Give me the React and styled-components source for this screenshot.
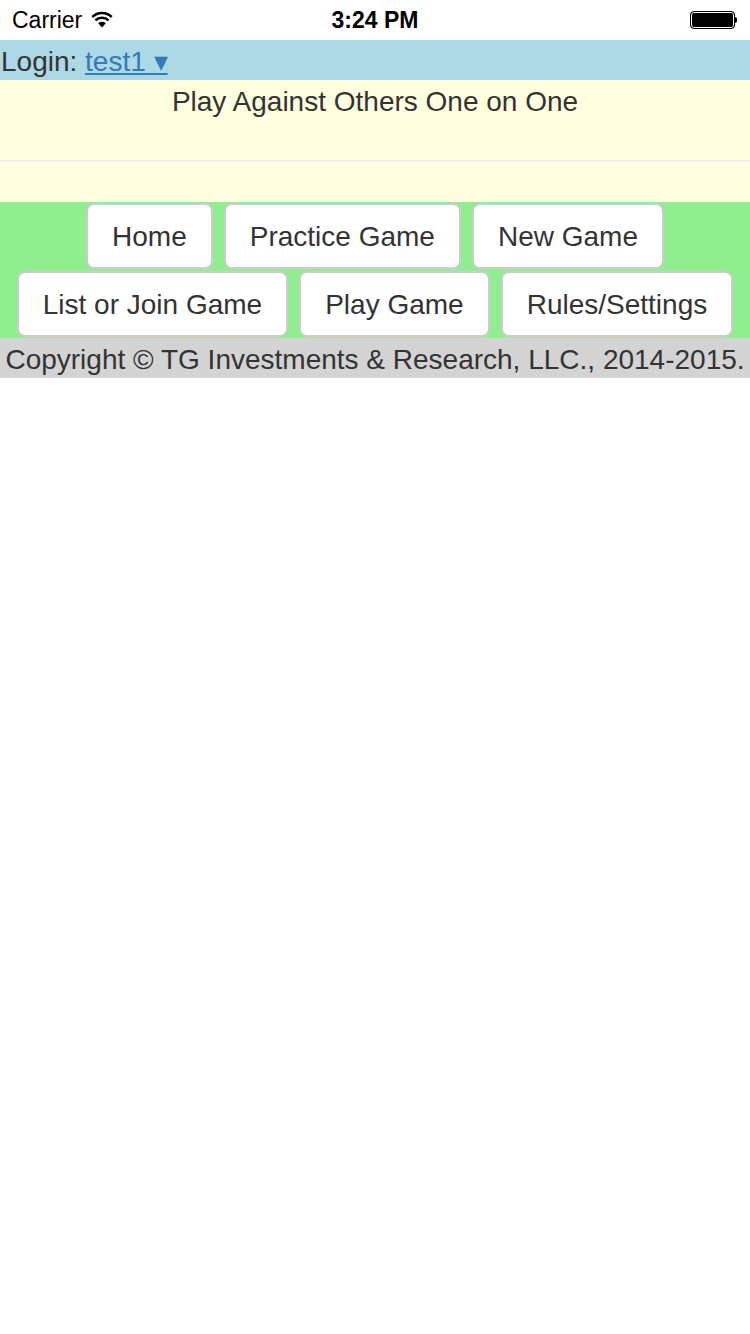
import React from "react";
import styled, { createGlobalStyle } from "styled-components";

const GlobalStyle = createGlobalStyle`
  html, body {
    margin: 0;
    padding: 0;
    background: #fff;
  }
  body {
    font-family: "Liberation Sans", Arial, sans-serif;
    color: #333;
  }
`;

const navRows = [
  ["Home", "Practice Game", "New Game"],
  ["List or Join Game", "Play Game", "Rules/Settings"],
];

export default function App() {
  return (
    <>
      <GlobalStyle />
      <StatusBar>
        <Carrier>
          Carrier
          <svg width="24" height="18" viewBox="0 0 24 18">
            <path d="M12 17.5 L8.2 13.3 A5.6 5.6 0 0 1 15.8 13.3 Z" fill="#000" />
            <path
              d="M5.4 10.4 A9.4 9.4 0 0 1 18.6 10.4"
              stroke="#000"
              strokeWidth="2.6"
              fill="none"
            />
            <path
              d="M2.3 7 A13.8 13.8 0 0 1 21.7 7"
              stroke="#000"
              strokeWidth="2.6"
              fill="none"
            />
          </svg>
        </Carrier>
        <Clock>3:24 PM</Clock>
        <Battery>
          <BatteryBody />
          <BatteryTip />
        </Battery>
      </StatusBar>
      <LoginBar>
        Login: <UserLink href="#">test1 ▾</UserLink>
      </LoginBar>
      <Banner>
        <Title>Play Against Others One on One</Title>
        <Rule />
      </Banner>
      <Nav>
        {navRows.map((row, i) => (
          <NavRow key={i}>
            {row.map((label) => (
              <NavButton key={label}>{label}</NavButton>
            ))}
          </NavRow>
        ))}
      </Nav>
      <Footer>Copyright © TG Investments &amp; Research, LLC., 2014-2015.</Footer>
    </>
  );
}

const StatusBar = styled.div`
  height: 40px;
  display: flex;
  align-items: center;
  justify-content: space-between;
  padding: 0 13px 0 12px;
  position: relative;
  font-family: "Liberation Sans", Arial, sans-serif;
  color: #000;
`;

const Carrier = styled.div`
  display: flex;
  align-items: center;
  gap: 8px;
  font-size: 23px;

  svg {
    margin-top: -2px;
  }
`;

const Clock = styled.div`
  position: absolute;
  left: 0;
  right: 0;
  text-align: center;
  font-size: 23px;
  font-weight: bold;
  pointer-events: none;
`;

const Battery = styled.div`
  display: flex;
  align-items: center;
`;

const BatteryBody = styled.div`
  width: 43px;
  height: 16px;
  border: 1px solid #000;
  border-radius: 4px;
  background: #000;
  box-shadow: inset 0 0 0 1px #fff;
`;

const BatteryTip = styled.div`
  width: 2px;
  height: 6px;
  background: #000;
  border-radius: 0 2px 2px 0;
`;

const LoginBar = styled.div`
  background: #add8e6;
  height: 40px;
  line-height: 43px;
  font-size: 28px;
  padding-left: 1px;
  white-space: pre;
  overflow: hidden;
`;

const UserLink = styled.a`
  color: #337ab7;
  text-decoration: underline;
`;

const Banner = styled.div`
  background: #ffffe0;
  padding-bottom: 40px;
`;

const Title = styled.div`
  text-align: center;
  font-size: 28px;
  line-height: 40px;
  padding-top: 2px;
`;

const Rule = styled.hr`
  margin: 38px 0 0;
  border: 0;
  border-top: 2px solid #eee;
  height: 0;
`;

const Nav = styled.div`
  background: #90ee90;
  padding: 1px 0 1px;
  display: flex;
  flex-direction: column;
  gap: 2px;
`;

const NavRow = styled.div`
  display: flex;
  justify-content: center;
  gap: 11px;
`;

const NavButton = styled.button`
  font-family: "Liberation Sans", Arial, sans-serif;
  font-size: 28px;
  line-height: 40px;
  color: #333;
  background: #fff;
  border: 2px solid #ccc;
  border-radius: 8px;
  padding: 12px 24px 10px;
  cursor: pointer;
`;

const Footer = styled.div`
  background: #d3d3d3;
  height: 40px;
  line-height: 43px;
  font-size: 28px;
  text-align: center;
  white-space: nowrap;
  overflow: hidden;
`;
